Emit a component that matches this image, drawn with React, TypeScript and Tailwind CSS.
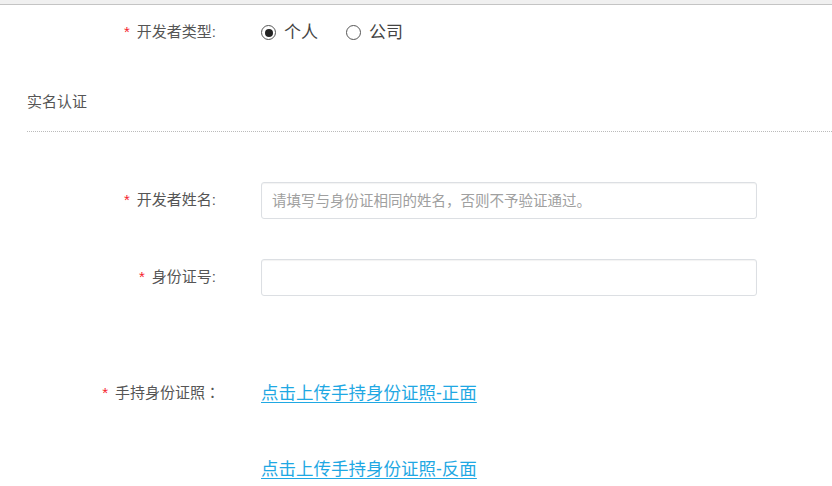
import React, { useState } from 'react';

const font = { fontFamily: '"Liberation Sans", "Noto Sans CJK SC", sans-serif' };
const tcFont = { fontFamily: '"Noto Sans CJK TC", sans-serif' };

const Label: React.FC<{ text: string; required?: boolean; wideColon?: boolean }> = ({
  text,
  required,
  wideColon,
}) => (
  <div className="w-[216px] shrink-0 text-right text-[15px] text-[#555]">
    {required && <span className="text-[#f5222d] mr-[7px]">*</span>}
    {text}
    {wideColon ? <span style={tcFont} className="inline-block w-[11px] text-left">：</span> : ':'}
  </div>
);

const Radio: React.FC<{ checked: boolean; label: string; onClick: () => void }> = ({
  checked,
  label,
  onClick,
}) => (
  <button type="button" onClick={onClick} className="flex items-center gap-[8px] text-[17px] text-[#444]">
    <span className="w-[15px] h-[15px] rounded-full border border-[#555] flex items-center justify-center">
      {checked && <span className="w-[8px] h-[8px] rounded-full bg-[#222]" />}
    </span>
    {label}
  </button>
);

export default function App() {
  const [type, setType] = useState<'person' | 'company'>('person');
  const [name, setName] = useState('');
  const [idNo, setIdNo] = useState('');

  return (
    <div className="w-[832px] h-[486px] bg-white overflow-hidden" style={font}>
      <div className="h-[5px] bg-[#f0f0f0] border-b border-[#c4c4c4]" />

      {/* 开发者类型 */}
      <div className="h-[55px] flex items-center">
        <Label text="开发者类型" required />
        <div className="ml-[45px] flex items-center gap-[28px]">
          <Radio checked={type === 'person'} label="个人" onClick={() => setType('person')} />
          <Radio checked={type === 'company'} label="公司" onClick={() => setType('company')} />
        </div>
      </div>

      {/* 实名认证 */}
      <div className="ml-[27px] mt-[32px] pb-[19px] border-b border-dotted border-[#bbb] text-[15px] leading-[20px] text-[#555]">
        实名认证
      </div>

      <div className="mt-[50px] flex items-center">
        <Label text="开发者姓名" required />
        <input
          value={name}
          onChange={(e) => setName(e.target.value)}
          placeholder="请填写与身份证相同的姓名，否则不予验证通过。"
          className="ml-[45px] w-[496px] h-[37px] px-[10px] rounded-[3px] border border-[#dcdfe3] shadow-[inset_0_1px_1px_rgba(0,0,0,0.05)] text-[14.5px] text-[#555] placeholder:text-[#a0a0a0] focus:outline-none"
        />
      </div>

      <div className="mt-[40px] flex items-center">
        <Label text="身份证号" required />
        <input
          value={idNo}
          onChange={(e) => setIdNo(e.target.value)}
          className="ml-[45px] w-[496px] h-[37px] px-[10px] rounded-[3px] border border-[#dcdfe3] shadow-[inset_0_1px_1px_rgba(0,0,0,0.05)] text-[14.5px] text-[#555] focus:outline-none"
        />
      </div>

      <div className="mt-[84px] flex items-center leading-[24px]">
        <Label text="手持身份证照" required wideColon />
        <a href="#" className="ml-[45px] text-[17.5px] text-[#1fa8e3] underline underline-offset-[3px]">
          点击上传手持身份证照-正面
        </a>
      </div>

      <div className="mt-[52px] flex items-center leading-[24px]">
        <a href="#" className="ml-[261px] text-[17.5px] text-[#1fa8e3] underline underline-offset-[3px]">
          点击上传手持身份证照-反面
        </a>
      </div>
    </div>
  );
}
